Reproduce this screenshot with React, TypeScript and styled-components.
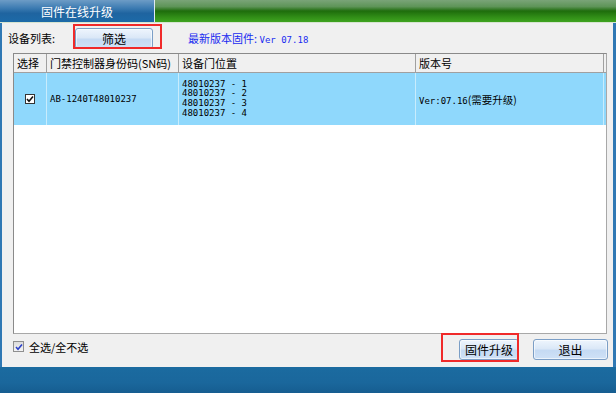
import styled, { createGlobalStyle } from 'styled-components';

const GlobalStyle = createGlobalStyle`
  html, body {
    margin: 0;
    padding: 0;
    background: #1b6a9e;
  }
  body {
    font-family: "Noto Sans CJK SC", "Noto Sans", sans-serif;
  }
`;

const Window = styled.div`
  width: 616px;
  height: 393px;
  display: flex;
  flex-direction: column;
  overflow: hidden;
  background: #1b6a9e;
`;

const TitleBar = styled.div`
  height: 23px;
  display: flex;
  border-bottom: 1px solid #d6e4d0;
  box-sizing: border-box;
`;

const Tab = styled.div`
  width: 154px;
  display: flex;
  align-items: center;
  justify-content: center;
  color: #fff;
  font-size: 12px;
  background: linear-gradient(#6d9cc6 0%, #3f7db3 35%, #1f64a0 60%, #1c6aa8 100%);
  border-right: 1px solid #dfe9f2;
`;

const GreenBar = styled.div`
  flex: 1;
  background: linear-gradient(#7aa478 0%, #5e9458 30%, #1e6c0c 50%, #2f8a16 75%, #3fa41f 100%);
`;

const Frame = styled.div`
  flex: 1;
  display: flex;
  padding: 0 3px 0 2px;
  background: #2f78b4;
`;

const Panel = styled.div`
  flex: 1;
  height: 344px;
  background: #f0f0f0;
  display: flex;
  flex-direction: column;
`;

const Toolbar = styled.div`
  height: 29px;
  display: flex;
  align-items: center;
  padding-left: 6px;
  font-size: 11px;
  color: #000;
  box-sizing: border-box;
  padding-top: 1px;
`;

type Box4 = { $l: number; $r: number; $t: number; $b: number };

const Highlight = styled.span<Box4>`
  position: relative;
  display: inline-flex;
  &::after {
    content: '';
    position: absolute;
    left: ${(p) => p.$l}px;
    right: ${(p) => p.$r}px;
    top: ${(p) => p.$t}px;
    bottom: ${(p) => p.$b}px;
    border: 2px solid #f02a2a;
    pointer-events: none;
  }
`;

const Button = styled.button<{ $w: number }>`
  width: ${(p) => p.$w}px;
  height: 21px;
  padding: 0;
  border: 1px solid #7b9ec6;
  border-radius: 3px;
  background: linear-gradient(#eef5fd 0%, #dbe8f7 45%, #c5daf3 55%, #cfe1f6 100%);
  box-shadow: inset 0 0 0 1px rgba(255, 255, 255, 0.6);
  font-family: "Noto Sans CJK SC", sans-serif;
  font-size: 12px;
  color: #000;
  display: flex;
  align-items: center;
  justify-content: center;
`;

const Label = styled.span`
  width: 67px;
`;

const Latest = styled.span`
  margin-left: 35px;
  color: #1a2cf0;
  font-size: 11px;
`;

const Mono = styled.span`
  font-family: "DejaVu Sans Mono", "Liberation Mono", monospace;
  font-size: 9px;
`;

const Table = styled.div`
  margin: 1px 0 0 11px;
  width: 594px;
  height: 281px;
  box-sizing: border-box;
  background: #fff;
  border: 1px solid #a8a8a8;
  border-left-color: #8a8a8a;
  border-top-color: #8a8a8a;
  display: flex;
  flex-direction: column;
`;

const cols = '33px 132px 237px 188px';

const HeadRow = styled.div`
  display: grid;
  grid-template-columns: ${cols};
  height: 18px;
  background: #f0f0f0;
  border-bottom: 1px solid #a0a0a0;
`;

const HeadCell = styled.div`
  font-size: 11px;
  line-height: 18px;
  padding-left: 3px;
  border-right: 1px solid #a0a0a0;
  white-space: nowrap;
  overflow: hidden;
`;

const DataRow = styled.div`
  display: grid;
  grid-template-columns: ${cols};
  height: 52px;
  background: #8fd8fc;
`;

const Cell = styled.div<{ $center?: boolean }>`
  display: flex;
  flex-direction: column;
  justify-content: center;
  align-items: ${(p) => (p.$center ? 'center' : 'flex-start')};
  padding-left: ${(p) => (p.$center ? 0 : 3)}px;
  border-right: 1px solid #c8ecfc;
  font-family: "DejaVu Sans Mono", "Liberation Mono", monospace;
  font-size: 9px;
  color: #000;
  white-space: nowrap;
`;

const Line = styled.div`
  line-height: 9.6px;
  height: 9.6px;
`;

const Box = styled.span<{ $soft?: boolean }>`
  width: ${(p) => (p.$soft ? 11 : 10)}px;
  height: ${(p) => (p.$soft ? 11 : 10)}px;
  box-sizing: border-box;
  border: 1px solid ${(p) => (p.$soft ? '#8f8f8f' : '#333')};
  background: ${(p) => (p.$soft ? 'linear-gradient(#dcdcdc, #f4f4f4)' : '#fff')};
  display: inline-flex;
  align-items: center;
  justify-content: center;
`;

const Cjk = styled.span`
  font-family: "Noto Sans CJK SC", sans-serif;
  font-size: 10.5px;
`;

const Footer = styled.div`
  flex: 1;
  display: flex;
  align-items: center;
  padding: 0 0 0 11px;
  font-size: 11px;
`;

const CheckAll = styled.label`
  display: flex;
  align-items: center;
  gap: 5px;
  margin-top: -8px;
`;

const Actions = styled.div`
  margin-left: auto;
  margin-right: 5px;
  display: flex;
  align-items: center;
  gap: 14px;
  margin-top: -2px;
`;

const BottomBar = styled.div`
  height: 26px;
  background: linear-gradient(#1b6ba0 0%, #1a679c 60%, #165d90 100%);
`;

function Tick({ color }: { color: string }) {
  return (
    <svg width="8" height="8" viewBox="0 0 8 8">
      <path d="M1 4 L3 6.2 L7 1.5" fill="none" stroke={color} strokeWidth="1.6" />
    </svg>
  );
}

export default function App() {
  return (
    <>
      <GlobalStyle />
      <Window>
        <TitleBar>
          <Tab>固件在线升级</Tab>
          <GreenBar />
        </TitleBar>
        <Frame>
          <Panel>
            <Toolbar>
              <Label>设备列表:</Label>
              <Highlight $l={-2} $r={-9} $t={-4} $b={0}>
                <Button $w={78}>筛选</Button>
              </Highlight>
              <Latest>
                最新版本固件: <Mono>Ver 07.18</Mono>
              </Latest>
            </Toolbar>
            <Table>
              <HeadRow>
                <HeadCell>选择</HeadCell>
                <HeadCell>门禁控制器身份码(SN码)</HeadCell>
                <HeadCell>设备门位置</HeadCell>
                <HeadCell>版本号</HeadCell>
              </HeadRow>
              <DataRow>
                <Cell $center>
                  <Box>
                    <Tick color="#111" />
                  </Box>
                </Cell>
                <Cell>AB-1240T48010237</Cell>
                <Cell>
                  <Line>48010237 - 1</Line>
                  <Line>48010237 - 2</Line>
                  <Line>48010237 - 3</Line>
                  <Line>48010237 - 4</Line>
                </Cell>
                <Cell>
                  <span>
                    Ver:07.16<Cjk>(需要升级)</Cjk>
                  </span>
                </Cell>
              </DataRow>
            </Table>
            <Footer>
              <CheckAll>
                <Box $soft>
                  <Tick color="#2a3fc8" />
                </Box>
                全选/全不选
              </CheckAll>
              <Actions>
                <Highlight $l={-18} $r={0} $t={-6} $b={-2}>
                  <Button $w={60}>固件升级</Button>
                </Highlight>
                <Button $w={75}>退出</Button>
              </Actions>
            </Footer>
          </Panel>
        </Frame>
        <BottomBar />
      </Window>
    </>
  );
}
